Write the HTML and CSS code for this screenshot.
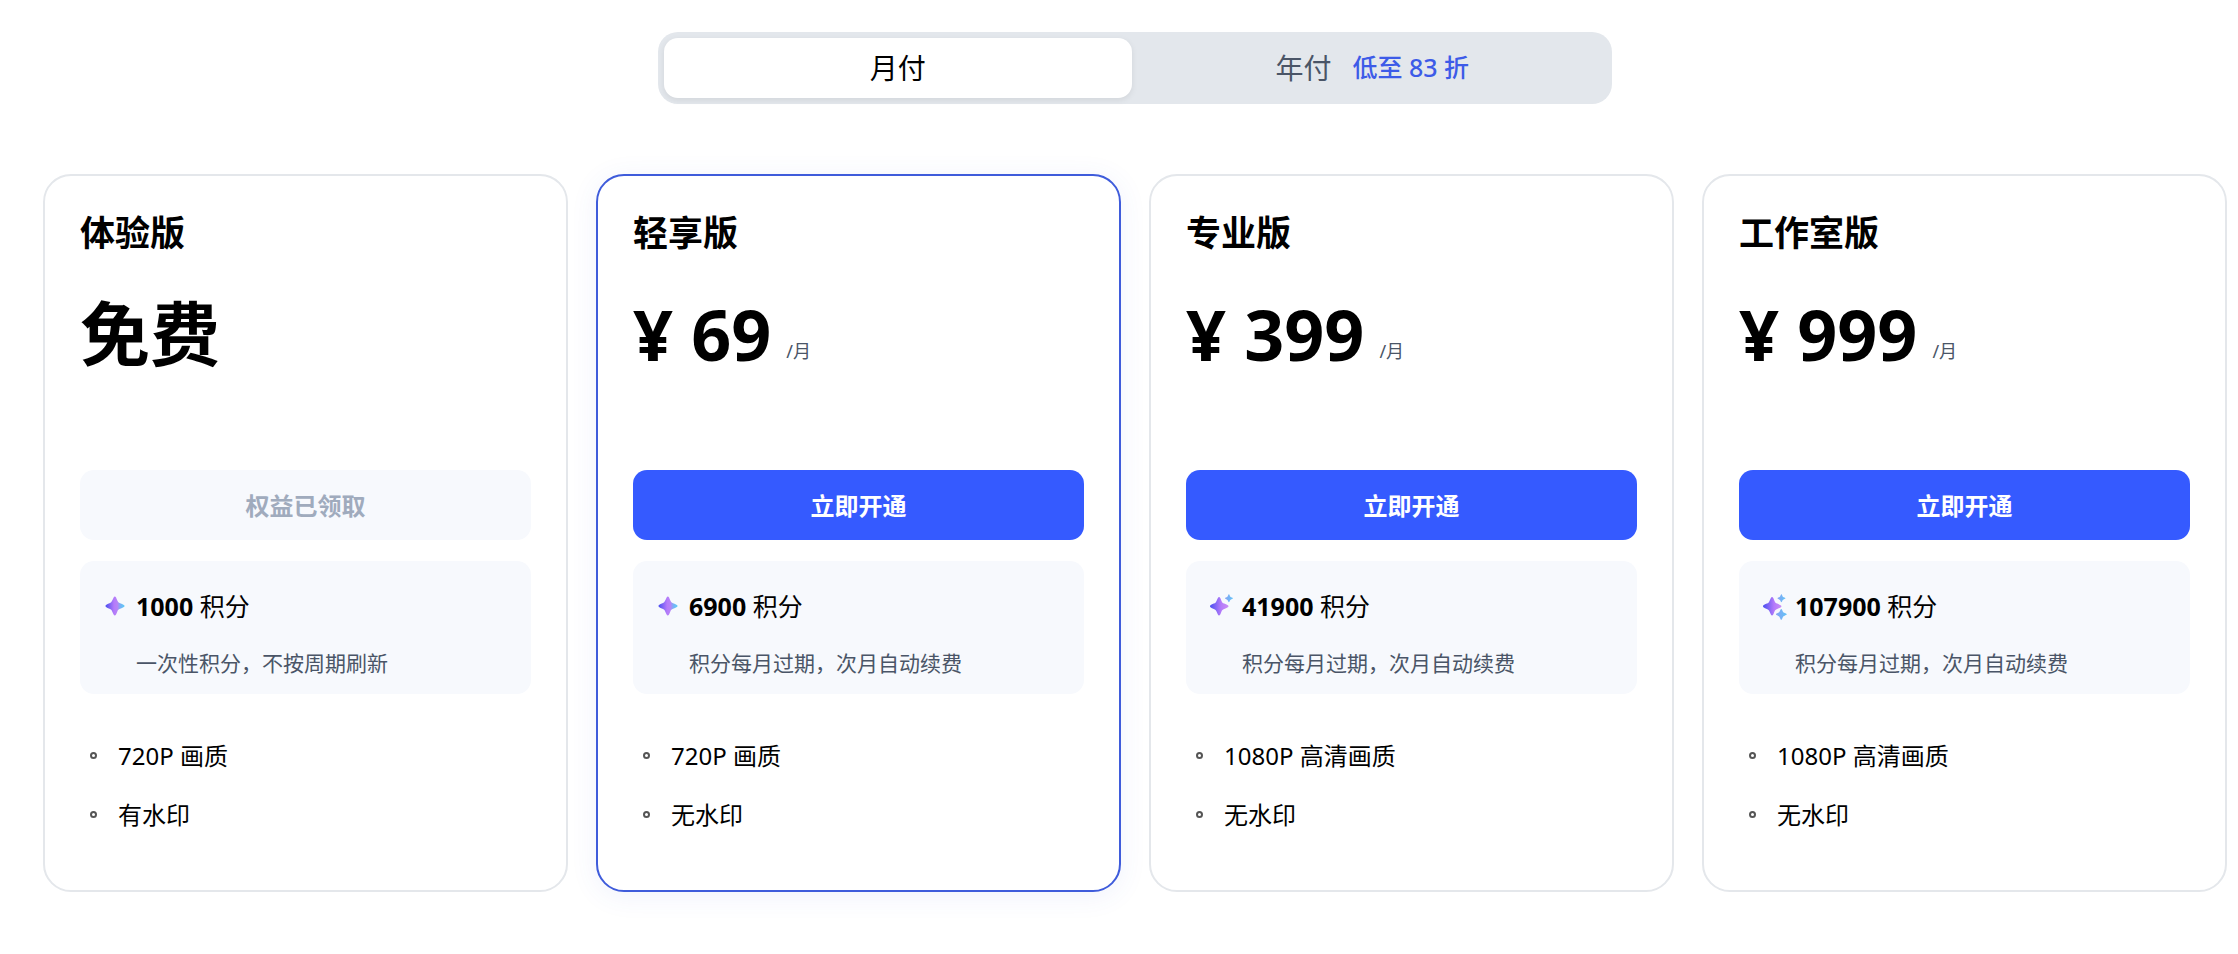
FILE: index.html
```html
<!DOCTYPE html>
<html lang="zh-CN">
<head>
  <meta charset="UTF-8">
  <meta name="viewport" content="width=device-width, initial-scale=1.0">
  <title>会员套餐</title>
  <link rel="stylesheet" href="styles.css">
</head>
<body>
  <!-- 图标定义 -->
  <svg class="defs" width="0" height="0" aria-hidden="true">
    <defs>
      <linearGradient id="main" x1="0" y1="0" x2="1" y2="0">
        <stop offset="0" stop-color="#4a4ff0"/>
        <stop offset="0.45" stop-color="#b57bfa"/>
        <stop offset="0.62" stop-color="#b884f6"/>
        <stop offset="0.8" stop-color="#74b4f6"/>
        <stop offset="1" stop-color="#5ccdf5"/>
      </linearGradient>
      <linearGradient id="violet" x1="0" y1="0" x2="1" y2="0">
        <stop offset="0" stop-color="#4a4ff0"/>
        <stop offset="0.6" stop-color="#b57bfa"/>
        <stop offset="1" stop-color="#c98df5"/>
      </linearGradient>
      <linearGradient id="sky" x1="0" y1="0" x2="1" y2="0">
        <stop offset="0" stop-color="#86a2f4"/>
        <stop offset="1" stop-color="#63c4f7"/>
      </linearGradient>
      <path id="star" d="M9 0C10 0 10.500 1.500 11.500 4C12.300 5.700 12.500 5.900 14.200 6.600C17 7.800 18.500 8.300 18.500 9.200C18.500 10.200 17 10.700 14.200 11.900C12.500 12.600 12.300 12.800 11.500 14.500C10.500 17 10 18.500 9 18.500C8.200 18.500 7.700 17 6.500 14.500C5.700 12.800 5.500 12.600 3.800 11.900C1 10.700 0 10.200 0 9.200C0 8.300 1 7.800 3.800 6.600C5.500 5.900 5.700 5.700 6.500 4C7.700 1.500 8.200 0 9 0Z"/>
    </defs>
  </svg>

  <div class="toggle">
    <button type="button" class="tab active">月付</button>
    <button type="button" class="tab">年付 <span class="discount">低至 83 折</span></button>
  </div>

  <div class="plans">
    <div class="card">
      <h2>体验版</h2>
      <div class="price">免费</div>
      <button type="button" class="btn" disabled>权益已领取</button>
      <div class="credits">
        <svg class="icon" viewBox="0 0 26 26"><use href="#star" transform="translate(1.500 2.500) scale(1.030)" fill="url(#main)"/></svg>
        <p class="amount"><strong>1000</strong> 积分</p>
        <p class="note">一次性积分，不按周期刷新</p>
      </div>
      <ul class="features">
        <li>720P 画质</li>
        <li>有水印</li>
      </ul>
    </div>

    <div class="card selected">
      <h2>轻享版</h2>
      <div class="price">¥ 69 <span class="unit">/月</span></div>
      <button type="button" class="btn">立即开通</button>
      <div class="credits">
        <svg class="icon" viewBox="0 0 26 26"><use href="#star" transform="translate(1.500 2.500) scale(1.030)" fill="url(#main)"/></svg>
        <p class="amount"><strong>6900</strong> 积分</p>
        <p class="note">积分每月过期，次月自动续费</p>
      </div>
      <ul class="features">
        <li>720P 画质</li>
        <li>无水印</li>
      </ul>
    </div>

    <div class="card">
      <h2>专业版</h2>
      <div class="price">¥ 399 <span class="unit">/月</span></div>
      <button type="button" class="btn">立即开通</button>
      <div class="credits">
        <svg class="icon" viewBox="0 0 26 26">
          <use href="#star" x="0" y="3" fill="url(#violet)"/>
          <use href="#star" transform="translate(15 0.300) scale(0.430)" fill="url(#sky)"/>
        </svg>
        <p class="amount"><strong>41900</strong> 积分</p>
        <p class="note">积分每月过期，次月自动续费</p>
      </div>
      <ul class="features">
        <li>1080P 高清画质</li>
        <li>无水印</li>
      </ul>
    </div>

    <div class="card">
      <h2>工作室版</h2>
      <div class="price">¥ 999 <span class="unit">/月</span></div>
      <button type="button" class="btn">立即开通</button>
      <div class="credits">
        <svg class="icon" viewBox="0 0 26 26">
          <use href="#star" x="0" y="3" fill="url(#violet)"/>
          <use href="#star" transform="translate(14.500 0.300) scale(0.430)" fill="url(#sky)"/>
          <use href="#star" transform="translate(13 15) scale(0.580)" fill="url(#sky)"/>
        </svg>
        <p class="amount"><strong>107900</strong> 积分</p>
        <p class="note">积分每月过期，次月自动续费</p>
      </div>
      <ul class="features">
        <li>1080P 高清画质</li>
        <li>无水印</li>
      </ul>
    </div>
  </div>
</body>
</html>
```

FILE: styles.css
```css
*, *::before { box-sizing: border-box; }
body { margin: 0; padding: 32px 11px 32px 43px; background: #fff; color: #000; font-family: "Noto Sans", "Noto Sans CJK SC", sans-serif; font-size: 24px; line-height: 35px; }
h2, p, ul { margin: 0; padding: 0; }
button { border: none; font-family: inherit; cursor: pointer; }
.defs { position: absolute; }

/* 月付 / 年付 */
.toggle { display: grid; grid-template-columns: 1fr 1fr; gap: 7px; max-width: 954px; margin: 0 auto 70px; padding: 6px; border-radius: 20px; background: #e3e7ec; }
.tab { display: flex; align-items: center; justify-content: center; gap: 21px; height: 60px; padding: 0 0 2px; border-radius: 14px; background: none; color: #4a5567; font-size: 28px; }
.tab.active { background: #fff; color: #000; box-shadow: 0 2px 6px rgba(0,0,0,0.08); }
.discount { padding-bottom: 2px; color: #3d5be8; font-size: 25px; font-weight: 500; }

.plans { display: grid; grid-template-columns: repeat(4, 1fr); gap: 28px; }
.card { padding: 35px 35px 58px; border: 2px solid #e4e7eb; border-radius: 28px; background: #fff; }
.card.selected { border-color: #3f5cdb; box-shadow: 0 4px 28px rgba(63,92,219,0.08); }
.card h2 { font-size: 35px; line-height: 44px; font-weight: bold; }
.price { display: flex; align-items: flex-end; gap: 15px; margin: 31px 0 88px; font-size: 70px; line-height: 96px; font-weight: bold; }
.unit { padding-bottom: 17px; color: #4a5567; font-size: 18px; line-height: 28px; font-weight: normal; }

.btn { display: block; width: 100%; height: 70px; padding: 0 0 2px; border-radius: 14px; background: #355aff; color: #fff; font-size: 24px; font-weight: bold; }
.btn:disabled { background: #f7f9fd; color: #a0abbd; cursor: default; }

.credits { display: grid; grid-template-columns: 26px 1fr; align-items: center; gap: 24px 6px; margin-top: 21px; padding: 28px 24px 16px; border-radius: 14px; background: #f7f9fd; }
.icon { width: 26px; height: 26px; }
.amount { font-size: 25px; }
.note { grid-column: 2; color: #4a5567; font-size: 21px; line-height: 30px; }

.features { display: grid; gap: 24px; margin-top: 44px; padding-left: 10px; list-style: none; }
.features li { display: flex; align-items: center; gap: 21px; }
.features li::before { content: ""; width: 7px; height: 7px; border: 2px solid #555; border-radius: 50%; }
```
